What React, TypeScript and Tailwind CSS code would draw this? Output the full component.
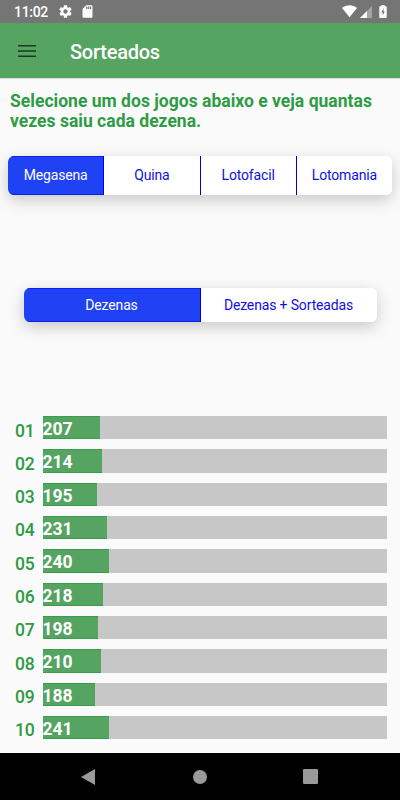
import { useState } from 'react';

interface Dezena {
  numero: string;
  vezes: number;
}

const jogos = ['Megasena', 'Quina', 'Lotofacil', 'Lotomania'];
const modos = ['Dezenas', 'Dezenas + Sorteadas'];

const MAX_SORTEIOS = 1240;

const dezenas: Dezena[] = [
  { numero: '01', vezes: 207 },
  { numero: '02', vezes: 214 },
  { numero: '03', vezes: 195 },
  { numero: '04', vezes: 231 },
  { numero: '05', vezes: 240 },
  { numero: '06', vezes: 218 },
  { numero: '07', vezes: 198 },
  { numero: '08', vezes: 210 },
  { numero: '09', vezes: 188 },
  { numero: '10', vezes: 241 },
];

function StatusBar() {
  return (
    <div className="flex h-[23px] shrink-0 items-center bg-[#757575] pl-[14px] pr-[13px] text-white">
      <span className="w-[44px] pt-px text-[14px] font-medium leading-[23px] tracking-[-0.3px]">11:02</span>
      <svg className="size-[15px]" viewBox="0 0 24 24" fill="currentColor">
        <path d="M19.43 12.98c.04-.32.07-.64.07-.98s-.03-.66-.07-.98l2.11-1.65c.19-.15.24-.42.12-.64l-2-3.46c-.12-.22-.39-.3-.61-.22l-2.49 1c-.52-.4-1.08-.73-1.69-.98l-.38-2.65C14.46 2.18 14.25 2 14 2h-4c-.25 0-.46.18-.49.42l-.38 2.65c-.61.25-1.17.59-1.69.98l-2.49-1c-.23-.09-.49 0-.61.22l-2 3.46c-.13.22-.07.49.12.64l2.11 1.65c-.04.32-.07.65-.07.98s.03.66.07.98l-2.11 1.65c-.19.15-.24.42-.12.64l2 3.46c.12.22.39.3.61.22l2.49-1c.52.4 1.08.73 1.69.98l.38 2.65c.03.24.24.42.49.42h4c.25 0 .46-.18.49-.42l.38-2.65c.61-.25 1.17-.59 1.69-.98l2.49 1c.23.09.49 0 .61-.22l2-3.46c.12-.22.07-.49-.12-.64l-2.11-1.65zM12 15.5c-1.93 0-3.5-1.57-3.5-3.5s1.57-3.5 3.5-3.5 3.5 1.57 3.5 3.5-1.57 3.5-3.5 3.5z" />
      </svg>
      <svg className="ml-[7px] size-[15px]" viewBox="0 0 24 24" fill="currentColor">
        <path d="M18 2h-8L4.02 8 4 20c0 1.100.9 2 2 2h12c1.100 0 2-.9 2-2V4c0-1.100-.9-2-2-2zm-6 6h-2V4h2v4zm3 0h-2V4h2v4zm3 0h-2V4h2v4z" />
      </svg>
      <div className="ml-auto flex items-center">
        <svg className="h-[13px] w-[15px]" viewBox="0 0 15 13" fill="currentColor">
          <path d="M0 3C4.4-.6 10.6-.6 15 3L7.5 12.3z" />
        </svg>
        <svg className="ml-[3px] mt-px size-3" viewBox="0 0 12 12" fill="currentColor">
          <path d="M0 12L12 0V12z" opacity=".35" />
          <path d="M0 12L7 5V12z" />
        </svg>
        <svg className="ml-[7px] h-[13px] w-2" viewBox="0 0 8 14" fill="currentColor">
          <path fillRule="evenodd" d="M2.3 0h3.4v1.4H7.2q.8 0 .8.8v11q0 .8-.8.8H.8q-.8 0-.8-.8v-11q0-.8.8-.8h1.500zM4.6 3.600L2.200 8h1.400v3.400L6 7H4.600z" />
        </svg>
      </div>
    </div>
  );
}

function Header() {
  return (
    <header className="flex h-[54.5px] shrink-0 items-center bg-[#55a461] shadow-[0_1px_1px_rgba(0,0,0,0.12)]">
      <button className="ml-[18px] w-[18px] pt-px" aria-label="Menu">
        <svg className="block h-3 w-[18px]" viewBox="0 0 18 12" fill="#1c3620">
          <path d="M0 0h18v1.400H0zM0 5.300h18v1.400H0zM0 10.600h18v1.400H0z" />
        </svg>
      </button>
      <h1 className="ml-[34px] pt-[3px] text-[20px] font-medium leading-6 tracking-[-0.25px] text-white">Sorteados</h1>
    </header>
  );
}

function Segmented({
  options,
  selected,
  onSelect,
  className,
}: {
  options: string[];
  selected: number;
  onSelect: (index: number) => void;
  className: string;
}) {
  return (
    <div className={`flex overflow-hidden rounded-[6px] bg-white shadow-[0_5px_16px_rgba(0,0,0,0.2)] ${className}`}>
      {options.map((option, index) => (
        <button
          key={option}
          onClick={() => onSelect(index)}
          className={`flex-1 basis-0 whitespace-nowrap border-[#0000e8] pt-px text-[14px] tracking-[-0.15px] ${
            index > 0 ? 'border-l' : ''
          } ${
            index === selected
              ? 'bg-[#2042f5] text-white shadow-[inset_0_1px_0_#0b20ee,inset_0_-1px_0_#0b20ee]'
              : 'bg-white text-[#1010e0]'
          }`}
        >
          {option}
        </button>
      ))}
    </div>
  );
}

function NavigationBar() {
  return (
    <nav className="flex h-[47px] shrink-0 items-center bg-black pl-[81px] pr-[82px] text-[#999]">
      <svg className="h-4 w-[14px]" viewBox="0 0 14 16" fill="currentColor">
        <path d="M14 0v16L0 8z" />
      </svg>
      <div className="ml-[98px] mr-auto size-[14px] rounded-full bg-[#999]" />
      <div className="size-[15px] rounded-[1px] bg-[#999]" />
    </nav>
  );
}

export default function App() {
  const [jogo, setJogo] = useState(0);
  const [modo, setModo] = useState(0);

  return (
    <div className="flex h-[800px] w-[400px] flex-col overflow-hidden bg-[#fafafa] font-['Roboto',sans-serif]">
      <StatusBar />
      <Header />

      <main className="flex flex-1 flex-col">
        <p className="ml-[10px] mt-[13px] w-[380px] text-[17.5px] font-bold leading-[20px] tracking-[0.02px] text-[#2e9b45]">
          Selecione um dos jogos abaixo e veja quantas vezes saiu cada dezena.
        </p>

        <Segmented options={jogos} selected={jogo} onSelect={setJogo} className="mx-2 mt-[25px] h-[39px]" />
        <Segmented options={modos} selected={modo} onSelect={setModo} className="mx-[23.5px] mt-[93.5px] h-[34px]" />

        {/* Bars */}
        <div className="mt-[94px] flex flex-col gap-[10px] pl-[15px] pr-[13px]">
          {dezenas.map((dezena) => (
            <div key={dezena.numero} className="flex h-[23.33px]">
              <span className="w-[27.5px] pt-[3.5px] text-[17.5px] font-medium leading-[22px] tracking-[-0.3px] text-[#2e9b45]">
                {dezena.numero}
              </span>
              <div className="flex-1 bg-[#c7c7c7]">
                <div
                  className="h-full bg-[#55a461] text-[17.5px] font-bold leading-[26px] text-white shadow-[inset_0_1px_0_#3a9c4d,inset_0_-1px_0_#3a9c4d]"
                  style={{ width: `${(dezena.vezes / MAX_SORTEIOS) * 100}%` }}
                >
                  {dezena.vezes}
                </div>
              </div>
            </div>
          ))}
        </div>
      </main>

      <NavigationBar />
    </div>
  );
}
